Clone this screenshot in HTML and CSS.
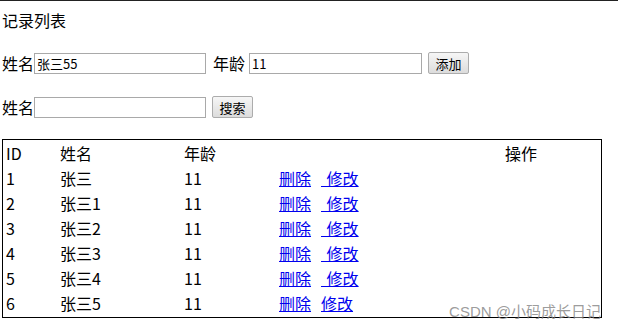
FILE: index.html
```html
<!DOCTYPE html>
<html lang="zh-CN">
<head>
    <meta charset="UTF-8">
    <title>记录列表</title>
    <link rel="stylesheet" href="styles.css">
</head>
<body>

    <div class="title">记录列表</div>

    <div class="form-row">
        <label>姓名</label><input type="text" class="text-input" value="张三55">
        <label class="gap-left">年龄</label>
        <input type="text" class="text-input age-input" value="11">
        <button class="btn">添加</button>
    </div>

    <div class="form-row second">
        <label>姓名</label><input type="text" class="text-input">
        <button class="btn">搜索</button>
    </div>

    <table class="list">
        <tbody>
            <tr>
                <td class="c-id">ID</td>
                <td class="c-name">姓名</td>
                <td class="c-age">年龄</td>
                <td class="c-links"></td>
                <td class="c-op">操作</td>
            </tr>
            <tr>
                <td>1</td><td>张三</td><td>11</td>
                <td><a href="#">删除</a><a href="#" class="edit">&nbsp;修改</a></td><td></td>
            </tr>
            <tr>
                <td>2</td><td>张三1</td><td>11</td>
                <td><a href="#">删除</a><a href="#" class="edit">&nbsp;修改</a></td><td></td>
            </tr>
            <tr>
                <td>3</td><td>张三2</td><td>11</td>
                <td><a href="#">删除</a><a href="#" class="edit">&nbsp;修改</a></td><td></td>
            </tr>
            <tr>
                <td>4</td><td>张三3</td><td>11</td>
                <td><a href="#">删除</a><a href="#" class="edit">&nbsp;修改</a></td><td></td>
            </tr>
            <tr>
                <td>5</td><td>张三4</td><td>11</td>
                <td><a href="#">删除</a><a href="#" class="edit">&nbsp;修改</a></td><td></td>
            </tr>
            <tr>
                <td>6</td><td>张三5</td><td>11</td>
                <td><a href="#">删除</a><a href="#" class="edit last">修改</a></td><td></td>
            </tr>
        </tbody>
    </table>

    <div class="watermark">CSDN @小码成长日记</div>

</body>
</html>
```

FILE: styles.css
```css
body {
    margin: 0;
    padding-left: 2px;
    border-top: 1px solid #222;
    font-family: "Noto Sans CJK SC", "Noto Sans", sans-serif;
    font-size: 16px;
    line-height: 21px;
    color: #000;
    position: relative;
    height: 327px;
}
.title {
    margin-top: 9px;
}
.form-row {
    margin-top: 21px;
    height: 22px;
    display: flex;
    align-items: center;
}
.form-row.second {
    margin-top: 22px;
}
.gap-left {
    margin-left: 7px;
    margin-right: 4px;
}
.text-input {
    width: 172px;
    height: 21px;
    box-sizing: border-box;
    border: 1px solid #a9a9a9;
    padding: 0 2px;
    font-family: "Noto Sans CJK SC", "Noto Sans", sans-serif;
    font-size: 13px;
    color: #000;
    outline: none;
}
.age-input {
    width: 173px;
}
.btn {
    margin-left: 6px;
    width: 41px;
    height: 22px;
    padding: 0;
    border: 1px solid #acacac;
    border-radius: 2px;
    background: linear-gradient(#f6f6f6, #dcdcdc);
    font-family: "Noto Sans CJK SC", "Noto Sans", sans-serif;
    font-size: 13px;
    color: #000;
}
/* 表格 */
.list {
    margin-top: 21px;
    width: 600px;
    border: 1px solid #000;
    border-spacing: 2px;
    table-layout: fixed;
}
.list td {
    padding: 1px;
    height: 21px;
    white-space: nowrap;
}
.c-id { width: 50px; }
.c-name { width: 120px; }
.c-age { width: 91px; }
.c-links { width: 222px; }
.c-op { width: 93px; }
a {
    color: #0000ee;
}
.edit {
    margin-left: 10px;
    word-spacing: 2px;
}
.edit.last {
    margin-left: 10px;
}
.watermark {
    position: absolute;
    right: 17px;
    bottom: 8px;
    font-family: "Liberation Sans", "Noto Sans CJK SC", sans-serif;
    font-size: 15px;
    line-height: 17px;
    color: rgba(130, 130, 130, 0.8);
}
```
